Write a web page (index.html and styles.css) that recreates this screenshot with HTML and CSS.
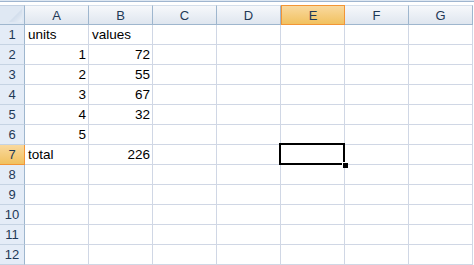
FILE: index.html
```html
<!DOCTYPE html>
<html>
<head>
<meta charset="utf-8">
<link rel="stylesheet" href="styles.css">
</head>
<body>
<div class="topbar"></div>
<div class="sheet">
  <div class="corner"><span class="tri"></span></div>
  <div class="ch">A</div><div class="ch">B</div><div class="ch">C</div><div class="ch">D</div><div class="ch sel">E</div><div class="ch">F</div><div class="ch">G</div>

  <div class="rh">1</div><div class="c">units</div><div class="c">values</div><div class="c"></div><div class="c"></div><div class="c"></div><div class="c"></div><div class="c"></div>
  <div class="rh">2</div><div class="c n">1</div><div class="c n">72</div><div class="c"></div><div class="c"></div><div class="c"></div><div class="c"></div><div class="c"></div>
  <div class="rh">3</div><div class="c n">2</div><div class="c n">55</div><div class="c"></div><div class="c"></div><div class="c"></div><div class="c"></div><div class="c"></div>
  <div class="rh">4</div><div class="c n">3</div><div class="c n">67</div><div class="c"></div><div class="c"></div><div class="c"></div><div class="c"></div><div class="c"></div>
  <div class="rh">5</div><div class="c n">4</div><div class="c n">32</div><div class="c"></div><div class="c"></div><div class="c"></div><div class="c"></div><div class="c"></div>
  <div class="rh">6</div><div class="c n">5</div><div class="c"></div><div class="c"></div><div class="c"></div><div class="c"></div><div class="c"></div><div class="c"></div>
  <div class="rh sel">7</div><div class="c">total</div><div class="c n">226</div><div class="c"></div><div class="c"></div><div class="c active"></div><div class="c"></div><div class="c"></div>
  <div class="rh">8</div><div class="c"></div><div class="c"></div><div class="c"></div><div class="c"></div><div class="c"></div><div class="c"></div><div class="c"></div>
  <div class="rh">9</div><div class="c"></div><div class="c"></div><div class="c"></div><div class="c"></div><div class="c"></div><div class="c"></div><div class="c"></div>
  <div class="rh">10</div><div class="c"></div><div class="c"></div><div class="c"></div><div class="c"></div><div class="c"></div><div class="c"></div><div class="c"></div>
  <div class="rh">11</div><div class="c"></div><div class="c"></div><div class="c"></div><div class="c"></div><div class="c"></div><div class="c"></div><div class="c"></div>
  <div class="rh">12</div><div class="c"></div><div class="c"></div><div class="c"></div><div class="c"></div><div class="c"></div><div class="c"></div><div class="c"></div>
</div>
</body>
</html>
```
FILE: styles.css
```css
html, body {
  margin: 0;
  padding: 0;
  background: #ffffff;
  overflow: hidden;
}
body {
  font-family: "Liberation Sans", Arial, sans-serif;
  font-size: 13.5px;
  color: #000;
}
.topbar {
  border-top: 1px solid #dde7f2;
  border-bottom: 1px solid #9fb5cf;
  background: #ffffff;
  height: 0;
  margin-bottom: 3px;
}
.sheet {
  display: grid;
  grid-template-columns: 25px repeat(7, 64px);
  grid-auto-rows: 20px;
  width: 474px;
}
.corner {
  position: relative;
  box-sizing: border-box;
  background: #dfe8f3;
  border-right: 1px solid #9eb6ce;
  border-bottom: 1px solid #9eb6ce;
  border-top: 1px solid #c3d1e2;
}
.tri {
  position: absolute;
  right: 2px;
  bottom: 2px;
  width: 13px;
  height: 13px;
  background: linear-gradient(135deg, #b9cbe0 0%, #e9eff7 100%);
  clip-path: polygon(100% 0, 100% 100%, 0 100%);
}
.ch {
  box-sizing: border-box;
  background: linear-gradient(#f6f8fb, #dfe6ef);
  border-right: 1px solid #9eb6ce;
  border-bottom: 1px solid #9eb6ce;
  border-top: 1px solid #d5dfeb;
  color: #1f3956;
  display: flex;
  align-items: center;
  justify-content: center;
  padding-top: 1px;
  font-size: 13px;
}
.ch.sel {
  background: linear-gradient(#f9d99f, #f1c15f);
  border: 1px solid #f29536;
}
.rh {
  box-sizing: border-box;
  background: #e4ecf7;
  border-right: 1px solid #9eb6ce;
  border-bottom: 1px solid #c5d3e3;
  color: #1f3956;
  display: flex;
  align-items: flex-end;
  justify-content: center;
  padding-bottom: 2px;
  font-size: 13px;
}
.rh.sel {
  background: linear-gradient(#f9d99f, #f1c15f);
  border-right: 1px solid #f29536;
  border-bottom: 1px solid #f29536;
}
.c {
  box-sizing: border-box;
  border-right: 1px solid #d0d7e5;
  border-bottom: 1px solid #d0d7e5;
  display: flex;
  align-items: flex-end;
  padding: 0 3px 2px 3px;
  white-space: nowrap;
}
.c.n {
  justify-content: flex-end;
  padding-right: 2px;
}
.c.active {
  position: relative;
}
.c.active::before {
  content: "";
  position: absolute;
  left: -2px;
  top: -2px;
  width: 66px;
  height: 22px;
  box-sizing: border-box;
  border: 2px solid #000;
}
.c.active::after {
  content: "";
  position: absolute;
  right: -4px;
  bottom: -4px;
  width: 5px;
  height: 5px;
  background: #000;
  border: 1px solid #fff;
  border-right: 0;
  border-bottom: 0;
}
```
